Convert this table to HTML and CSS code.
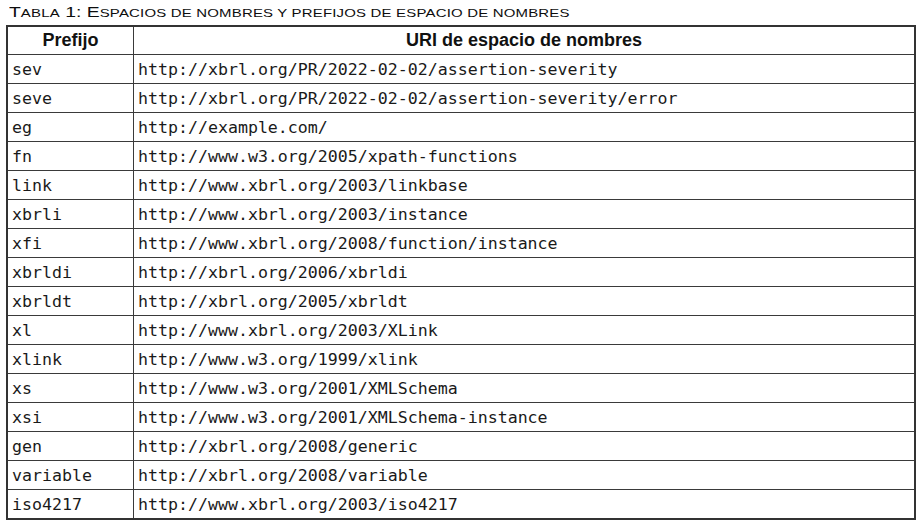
FILE: index.html
```html
<!DOCTYPE html>
<html lang="es">
<head>
<meta charset="utf-8">
<link rel="stylesheet" href="styles.css">
</head>
<body>
<div class="caption"><span class="cap-text">T<span class="sc">abla</span> 1: E<span class="sc">spacios de nombres y prefijos de espacio de nombres</span></span></div>
<table class="ns">
<thead>
<tr><th class="c1">Prefijo</th><th>URI de espacio de nombres</th></tr>
</thead>
<tbody>
<tr><td>sev</td><td>http://xbrl.org/PR/2022-02-02/assertion-severity</td></tr>
<tr><td>seve</td><td>http://xbrl.org/PR/2022-02-02/assertion-severity/error</td></tr>
<tr><td>eg</td><td>http://example.com/</td></tr>
<tr><td>fn</td><td>http://www.w3.org/2005/xpath-functions</td></tr>
<tr><td>link</td><td>http://www.xbrl.org/2003/linkbase</td></tr>
<tr><td>xbrli</td><td>http://www.xbrl.org/2003/instance</td></tr>
<tr><td>xfi</td><td>http://www.xbrl.org/2008/function/instance</td></tr>
<tr><td>xbrldi</td><td>http://xbrl.org/2006/xbrldi</td></tr>
<tr><td>xbrldt</td><td>http://xbrl.org/2005/xbrldt</td></tr>
<tr><td>xl</td><td>http://www.xbrl.org/2003/XLink</td></tr>
<tr><td>xlink</td><td>http://www.w3.org/1999/xlink</td></tr>
<tr><td>xs</td><td>http://www.w3.org/2001/XMLSchema</td></tr>
<tr><td>xsi</td><td>http://www.w3.org/2001/XMLSchema-instance</td></tr>
<tr><td>gen</td><td>http://xbrl.org/2008/generic</td></tr>
<tr><td>variable</td><td>http://xbrl.org/2008/variable</td></tr>
<tr><td>iso4217</td><td>http://www.xbrl.org/2003/iso4217</td></tr>
</tbody>
</table>
</body>
</html>
```
FILE: styles.css
```css
html, body {
  margin: 0;
  padding: 0;
  background: #ffffff;
}
body {
  padding: 3px 5px 0 6px;
  font-family: "Liberation Sans", Arial, sans-serif;
  color: #111;
}
.caption {
  font-size: 15px;
  line-height: 18px;
  height: 22px;
  padding-left: 3px;
  color: #0d0d0d;
  white-space: nowrap;
}
.cap-text {
  display: inline-block;
  transform: scaleX(1.29);
  transform-origin: 0 50%;
}
.caption .sc {
  font-size: 11.6px;
  text-transform: uppercase;
  letter-spacing: 0.15px;
}
.ns {
  border-collapse: collapse;
  width: 910px;
  border: 2px solid #333;
}
.ns th, .ns td {
  border: 1px solid #3a3a3a;
  padding: 0 4px;
  text-align: left;
}
.ns th {
  height: 27px;
  font-family: "Liberation Sans", Arial, sans-serif;
  font-weight: bold;
  font-size: 18px;
  text-align: center;
  color: #111;
}
.ns th.c1 {
  width: 117px;
}
.ns td {
  height: 28px;
  font-family: "DejaVu Sans Mono", "Liberation Mono", monospace;
  font-size: 16.6px;
  color: #1a1a1a;
}
```
